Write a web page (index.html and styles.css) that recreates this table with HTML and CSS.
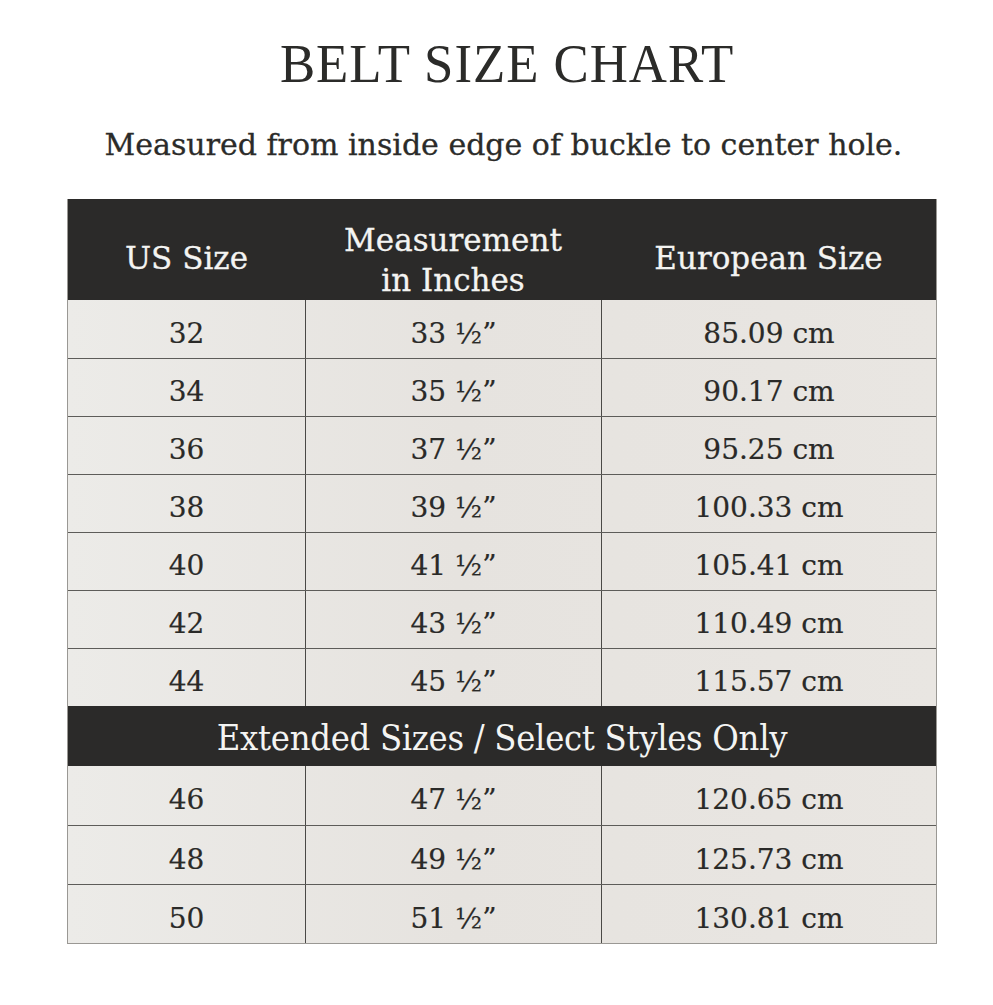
FILE: index.html
```html
<!DOCTYPE html>
<html>
<head>
<meta charset="utf-8">
<link rel="stylesheet" href="styles.css">
</head>
<body>
<div class="page">
  <h1 class="title">BELT SIZE CHART</h1>
  <p class="subtitle">Measured from inside edge of buckle to center hole.</p>
  <div class="chart">
    <div class="head">
      <div class="hcell">US Size</div>
      <div class="hcell">Measurement<br>in Inches</div>
      <div class="hcell">European Size</div>
    </div>
    <div class="row"><div class="cell">32</div><div class="cell">33 ½”</div><div class="cell">85.09 cm</div></div>
    <div class="row"><div class="cell">34</div><div class="cell">35 ½”</div><div class="cell">90.17 cm</div></div>
    <div class="row"><div class="cell">36</div><div class="cell">37 ½”</div><div class="cell">95.25 cm</div></div>
    <div class="row"><div class="cell">38</div><div class="cell">39 ½”</div><div class="cell">100.33 cm</div></div>
    <div class="row"><div class="cell">40</div><div class="cell">41 ½”</div><div class="cell">105.41 cm</div></div>
    <div class="row"><div class="cell">42</div><div class="cell">43 ½”</div><div class="cell">110.49 cm</div></div>
    <div class="row"><div class="cell">44</div><div class="cell">45 ½”</div><div class="cell">115.57 cm</div></div>
    <div class="band">Extended Sizes / Select Styles Only</div>
    <div class="row ext"><div class="cell">46</div><div class="cell">47 ½”</div><div class="cell">120.65 cm</div></div>
    <div class="row ext"><div class="cell">48</div><div class="cell">49 ½”</div><div class="cell">125.73 cm</div></div>
    <div class="row ext"><div class="cell">50</div><div class="cell">51 ½”</div><div class="cell">130.81 cm</div></div>
  </div>
</div>
</body>
</html>
```
FILE: styles.css
```css
html, body {
  margin: 0;
  padding: 0;
  background: #ffffff;
}
.page {
  width: 993px;
  height: 1005px;
  padding-top: 34px;
  box-sizing: border-box;
  color: #2a2a28;
}
.title {
  margin: 0;
  text-align: center;
  font-family: "Liberation Serif", "Times New Roman", serif;
  font-weight: normal;
  font-size: 55px;
  line-height: 60px;
  letter-spacing: 1px;
  transform: scaleX(0.96);
  color: #2b2b29;
  padding-left: 22px;
}
.subtitle {
  margin: 33px 0 0 0;
  text-align: center;
  font-family: "DejaVu Serif", serif;
  font-size: 30px;
  line-height: 36px;
  letter-spacing: 0;
  color: #2b2b29;
  -webkit-text-stroke: 0.3px #2b2b29;
  padding-left: 14px;
}
.chart {
  margin: 36px 0 0 67px;
  width: 868px;
  background: linear-gradient(90deg, #ecebe8 0%, #e6e3df 45%, #e9e6e2 100%);
  border: 1px solid #9a9894;
  border-top: none;
  font-family: "DejaVu Serif", serif;
}
.head {
  display: grid;
  grid-template-columns: 237px 296px 1fr;
  height: 101px;
  background: #2b2a29;
  color: #f4f4f2;
  align-items: center;
}
.hcell {
  text-align: center;
  font-size: 31px;
  line-height: 40px;
  -webkit-text-stroke: 0.3px #f4f4f2;
}
.hcell:first-child { padding-top: 16px; }
.hcell:nth-child(2) { padding-top: 20px; }
.hcell:nth-child(3) { padding-top: 16px; }
.row {
  display: grid;
  grid-template-columns: 237px 296px 1fr;
  height: 58px;
  border-top: 1px solid #5d5c59;
  box-sizing: border-box;
}
.row.ext { height: 59px; }
.head + .row { border-top: none; }
.cell {
  display: flex;
  align-items: center;
  justify-content: center;
  font-size: 28px;
  color: #2a2a28;
  border-left: 1px solid #4a4946;
  padding-top: 8px;
  -webkit-text-stroke: 0.2px #2a2a28;
}
.cell:first-child { border-left: none; }
.band {
  height: 60px;
  background: #2b2a29;
  color: #f4f4f2;
  display: flex;
  align-items: center;
  justify-content: center;
  font-size: 36px;
  letter-spacing: -0.3px;
  font-stretch: condensed;
  padding-top: 2px;
  box-sizing: border-box;
}
.band + .row { border-top: none; }
```
